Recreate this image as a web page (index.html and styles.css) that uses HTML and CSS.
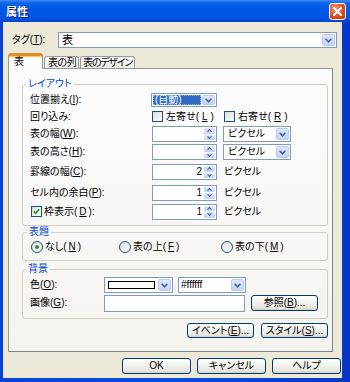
FILE: index.html
```html
<!DOCTYPE html>
<html lang="ja">
  <head>
    <meta charset="UTF-8" />
    <meta name="viewport" content="width=device-width, initial-scale=1.0" />
    <title>属性</title>
    <link rel="stylesheet" href="styles.css">
  </head>
  <body>
    <div class="window">
      <!-- Titellinje -->
      <div class="titlebar">
        <span class="title">属性</span>
        <span class="close">
          <svg width="9" height="9" viewBox="0 0 9 9"><path d="M1 1 L8 8 M8 1 L1 8" stroke="#fff" stroke-width="2" stroke-linecap="square"/></svg>
        </span>
      </div>

      <div class="client">
        <div class="tag_row">
          <span class="tag_label">タグ(<u>T</u>):</span>
          <div class="combo combo_tag">
            <span class="combo_text">表</span>
            <span class="arrow"><svg width="7" height="5" viewBox="0 0 7 5"><path d="M0.6 0.8 L3.5 3.8 L6.4 0.8" fill="none" stroke="#4d6185" stroke-width="1.6"/></svg></span>
          </div>
        </div>

        <!-- Faner -->
        <div class="tabs">
          <div class="tab tab_1 valgt">表</div>
          <div class="tab tab_2">表の列</div>
          <div class="tab tab_3">表のデザイン</div>
        </div>

        <div class="panel">
          <fieldset class="group group_layout">
            <legend>レイアウト</legend>
            <div class="layout_grid">
              <span class="lbl">位置揃え(<u>I</u>):</span>
              <div class="combo combo_auto">
                <span class="combo_sel">(自動)</span>
                <span class="arrow"><svg width="7" height="5" viewBox="0 0 7 5"><path d="M0.6 0.8 L3.5 3.8 L6.4 0.8" fill="none" stroke="#4d6185" stroke-width="1.6"/></svg></span>
              </div>
              <span></span>

              <span class="lbl">回り込み:</span>
              <span class="check_item"><span class="check"></span>左寄せ(<u>L</u>)</span>
              <span class="check_item right_check"><span class="check"></span>右寄せ(<u>R</u>)</span>

              <span class="lbl">表の幅(<u>W</u>):</span>
              <div class="spin">
                <span class="spin_val"></span>
                <span class="spin_btns">
                  <span class="spin_btn"><svg width="5" height="3" viewBox="0 0 5 3"><path d="M0.5 2.6 L2.5 0.6 L4.5 2.6" fill="none" stroke="#4d6185" stroke-width="1.1"/></svg></span>
                  <span class="spin_btn"><svg width="5" height="3" viewBox="0 0 5 3"><path d="M0.5 0.4 L2.5 2.4 L4.5 0.4" fill="none" stroke="#4d6185" stroke-width="1.1"/></svg></span>
                </span>
              </div>
              <div class="combo combo_unit">
                <span class="combo_text">ピクセル</span>
                <span class="arrow"><svg width="7" height="5" viewBox="0 0 7 5"><path d="M0.6 0.8 L3.5 3.8 L6.4 0.8" fill="none" stroke="#4d6185" stroke-width="1.6"/></svg></span>
              </div>

              <span class="lbl">表の高さ(<u>H</u>):</span>
              <div class="spin">
                <span class="spin_val"></span>
                <span class="spin_btns">
                  <span class="spin_btn"><svg width="5" height="3" viewBox="0 0 5 3"><path d="M0.5 2.6 L2.5 0.6 L4.5 2.6" fill="none" stroke="#4d6185" stroke-width="1.1"/></svg></span>
                  <span class="spin_btn"><svg width="5" height="3" viewBox="0 0 5 3"><path d="M0.5 0.4 L2.5 2.4 L4.5 0.4" fill="none" stroke="#4d6185" stroke-width="1.1"/></svg></span>
                </span>
              </div>
              <div class="combo combo_unit">
                <span class="combo_text">ピクセル</span>
                <span class="arrow"><svg width="7" height="5" viewBox="0 0 7 5"><path d="M0.6 0.8 L3.5 3.8 L6.4 0.8" fill="none" stroke="#4d6185" stroke-width="1.6"/></svg></span>
              </div>

              <span class="lbl">罫線の幅(<u>C</u>):</span>
              <div class="spin">
                <span class="spin_val">2</span>
                <span class="spin_btns">
                  <span class="spin_btn"><svg width="5" height="3" viewBox="0 0 5 3"><path d="M0.5 2.6 L2.5 0.6 L4.5 2.6" fill="none" stroke="#4d6185" stroke-width="1.1"/></svg></span>
                  <span class="spin_btn"><svg width="5" height="3" viewBox="0 0 5 3"><path d="M0.5 0.4 L2.5 2.4 L4.5 0.4" fill="none" stroke="#4d6185" stroke-width="1.1"/></svg></span>
                </span>
              </div>
              <span class="unit">ピクセル</span>

              <span class="lbl">セル内の余白(<u>P</u>):</span>
              <div class="spin">
                <span class="spin_val">1</span>
                <span class="spin_btns">
                  <span class="spin_btn"><svg width="5" height="3" viewBox="0 0 5 3"><path d="M0.5 2.6 L2.5 0.6 L4.5 2.6" fill="none" stroke="#4d6185" stroke-width="1.1"/></svg></span>
                  <span class="spin_btn"><svg width="5" height="3" viewBox="0 0 5 3"><path d="M0.5 0.4 L2.5 2.4 L4.5 0.4" fill="none" stroke="#4d6185" stroke-width="1.1"/></svg></span>
                </span>
              </div>
              <span class="unit">ピクセル</span>

              <span class="check_item frame_check"><span class="check checked"><svg width="7" height="7" viewBox="0 0 7 7"><path d="M0.8 3.4 L2.7 5.3 L6.2 1.2" fill="none" stroke="#21a121" stroke-width="1.6"/></svg></span>枠表示(<u>D</u>):</span>
              <div class="spin">
                <span class="spin_val">1</span>
                <span class="spin_btns">
                  <span class="spin_btn"><svg width="5" height="3" viewBox="0 0 5 3"><path d="M0.5 2.6 L2.5 0.6 L4.5 2.6" fill="none" stroke="#4d6185" stroke-width="1.1"/></svg></span>
                  <span class="spin_btn"><svg width="5" height="3" viewBox="0 0 5 3"><path d="M0.5 0.4 L2.5 2.4 L4.5 0.4" fill="none" stroke="#4d6185" stroke-width="1.1"/></svg></span>
                </span>
              </div>
              <span class="unit">ピクセル</span>
            </div>
          </fieldset>

          <fieldset class="group group_caption">
            <legend>表題</legend>
            <div class="radio_row">
              <span class="radio_item item_none"><span class="radio on"></span>なし(<u>N</u>)</span>
              <span class="radio_item item_top"><span class="radio"></span>表の上(<u>F</u>)</span>
              <span class="radio_item"><span class="radio"></span>表の下(<u>M</u>)</span>
            </div>
          </fieldset>

          <fieldset class="group group_bg">
            <legend>背景</legend>
            <div class="bg_row">
              <span class="bg_lbl">色(<u>O</u>):</span>
              <div class="combo combo_color">
                <span class="swatch"></span>
                <span class="arrow"><svg width="7" height="5" viewBox="0 0 7 5"><path d="M0.6 0.8 L3.5 3.8 L6.4 0.8" fill="none" stroke="#4d6185" stroke-width="1.6"/></svg></span>
              </div>
              <div class="combo combo_hex">
                <span class="combo_text">#ffffff</span>
                <span class="arrow"><svg width="7" height="5" viewBox="0 0 7 5"><path d="M0.6 0.8 L3.5 3.8 L6.4 0.8" fill="none" stroke="#4d6185" stroke-width="1.6"/></svg></span>
              </div>
            </div>
            <div class="bg_row">
              <span class="bg_lbl">画像(<u>G</u>):</span>
              <div class="textbox"></div>
              <button class="xp_btn btn_browse">参照(<u>B</u>)...</button>
            </div>
          </fieldset>

          <div class="panel_buttons">
            <button class="xp_btn">イベント(<u>E</u>)...</button>
            <button class="xp_btn">スタイル(<u>S</u>)...</button>
          </div>
        </div>

        <div class="dialog_buttons">
          <button class="xp_btn">OK</button>
          <button class="xp_btn">キャンセル</button>
          <button class="xp_btn">ヘルプ</button>
        </div>
      </div>
    </div>
  </body>
</html>
```

FILE: styles.css
```css
* {
  margin: 0;
  padding: 0;
  box-sizing: border-box;
}

body {
  font-family: "Liberation Sans", "Noto Sans CJK JP", sans-serif;
  font-size: 10px;
  line-height: 12px;
  font-feature-settings: "palt";
  color: #000;
  background: #ece9d8;
  white-space: nowrap;
}

u {
  text-underline-offset: 1px;
}

/* Vindue og titellinje */
.window {
  width: 350px;
  height: 382px;
  display: flex;
  flex-direction: column;
  background: linear-gradient(to right, #0842d6, #0a4ee0 50%, #0736c4);
}

.titlebar {
  height: 22px;
  display: flex;
  align-items: center;
  justify-content: space-between;
  padding: 2px 4px 0 6px;
  background: linear-gradient(#3d8ef6 0%, #0b62ea 14%, #0058e7 45%, #0052df 85%, #0043cf 100%);
}

.title {
  color: #fff;
  font-weight: bold;
  font-size: 11px;
  text-shadow: 1px 1px 0 #0a1e8c;
}

.close {
  width: 17px;
  height: 17px;
  margin-top: -1px;
  display: flex;
  align-items: center;
  justify-content: center;
  border: 1px solid #fff;
  border-radius: 3px;
  background: radial-gradient(circle at 35% 30%, #f0956d, #dc4f26 55%, #b8330f);
}

.client {
  flex: 1;
  margin: 0 8px 4px 3px;
  background: #ece9d8;
  display: flex;
  flex-direction: column;
}

/* Tag-linje */
.tag_row {
  display: flex;
  align-items: center;
  height: 16px;
  margin-top: 10px;
  padding-left: 9px;
}

.tag_label {
  width: 46px;
}

/* Kombobokse */
.combo {
  display: flex;
  align-items: stretch;
  background: #fff;
  border: 1px solid #7f9db9;
  padding: 1px;
}

.combo_text {
  flex: 1;
  padding-left: 3px;
  line-height: 12px;
}

.combo_tag {
  width: 279px;
  height: 16px;
}

.combo_tag .combo_text {
  padding-left: 2px;
  font-size: 11px;
}

.arrow {
  width: 13px;
  display: flex;
  align-items: center;
  justify-content: center;
  border-radius: 2px;
  border: 1px solid #b9cbf3;
  background: linear-gradient(#dde7fd, #c2d3fa);
}

.combo_auto {
  width: 66px;
  height: 14px;
  margin-left: -1px;
}

.combo_sel {
  flex: 1;
  margin-right: 1px;
  padding-left: 2px;
  line-height: 10px;
  color: #fff;
  background: #316ac5;
  outline: 1px dotted #8fb0e8;
  outline-offset: -1px;
}

.combo_unit {
  width: 68px;
  height: 16px;
}

/* Faner */
.tabs {
  display: flex;
  align-items: flex-end;
  height: 15px;
  margin: 5px 0 0 5px;
  gap: 1px;
  position: relative;
  z-index: 1;
}

.tab {
  height: 12px;
  border: 1px solid #919b9c;
  border-bottom: none;
  border-radius: 3px 3px 0 0;
  background: linear-gradient(#fff, #ecebe6);
  line-height: 11px;
  overflow: hidden;
}

.tab_1 {
  width: 35px;
  padding-left: 5px;
}

.tab_2 {
  width: 35px;
  padding-left: 3px;
  letter-spacing: -0.5px;
}

.tab_3 {
  width: 55px;
  padding-left: 2px;
  letter-spacing: -1.2px;
}

.tab.valgt {
  height: 16px;
  margin-bottom: -1px;
  background: #fcfcfe;
  border-top: 3px solid #e68b2c;
  box-shadow: inset 0 1px 0 #ffc73c;
  line-height: 12px;
}

.panel {
  width: 325px;
  height: 284px;
  margin-left: 5px;
  border: 1px solid #919b9c;
  border-right-color: #7c8687;
  border-bottom-color: #7c8687;
  background: linear-gradient(#fcfcfe, #f4f3ee);
  padding: 9px 0 0 13px;
  display: flex;
  flex-direction: column;
}

/* Grupperammer */
.group {
  width: 306px;
  border: 1px solid #d0d0bf;
  border-radius: 3px;
}

.group legend {
  color: #0046d5;
  padding: 0 2px;
  margin-left: -4px;
  line-height: 12px;
}

.group_layout {
  height: 148px;
  padding: 2px 7px 0;
}

.layout_grid {
  display: grid;
  grid-template-columns: 116px 65px 80px;
  grid-template-rows: 16px 17px 18px 18px 22px 19px 19px;
  column-gap: 6px;
  align-items: center;
}

.check_item {
  display: flex;
  align-items: center;
  gap: 3px;
}

.right_check {
  margin-left: 1px;
}

.frame_check {
  margin-left: 1px;
  gap: 2px;
}

.check {
  width: 11px;
  height: 11px;
  border: 1px solid #1c5180;
  background: linear-gradient(135deg, #dcdcd7, #fff);
  display: flex;
  align-items: center;
  justify-content: center;
}

/* Spin-felter */
.spin {
  width: 65px;
  height: 16px;
  display: flex;
  background: #fff;
  border: 1px solid #7f9db9;
  padding: 1px;
}

.spin_val {
  flex: 1;
  text-align: right;
  padding-right: 2px;
  line-height: 12px;
}

.spin_btns {
  width: 11px;
  display: flex;
  flex-direction: column;
  gap: 1px;
}

.spin_btn {
  flex: 1;
  display: flex;
  align-items: center;
  justify-content: center;
  border-radius: 1px;
  background: linear-gradient(#dde7fd, #c2d3fa);
}

.unit {
  padding-left: 1px;
}

/* Tabel-overskrift */
.group_caption {
  height: 35px;
  padding: 0 8px;
}

.radio_row {
  display: flex;
  align-items: center;
  height: 18px;
}

.radio_item {
  display: flex;
  align-items: center;
  gap: 2px;
}

.item_none {
  width: 88px;
}

.item_top {
  width: 102px;
}

.radio {
  width: 12px;
  height: 12px;
  border: 1px solid #1c5180;
  border-radius: 50%;
  background: linear-gradient(135deg, #dcdcd7, #fff);
  display: flex;
  align-items: center;
  justify-content: center;
}

.radio.on::after {
  content: "";
  width: 4px;
  height: 4px;
  border-radius: 50%;
  background: #21a121;
}

/* Baggrund */
.group_bg {
  height: 56px;
  margin-top: 2px;
  padding: 2px 7px 0;
  display: flex;
  flex-direction: column;
  gap: 2px;
}

.bg_row {
  display: flex;
  align-items: center;
  height: 16px;
}

.bg_lbl {
  width: 74px;
}

.combo_color {
  width: 69px;
  height: 16px;
  margin-right: 5px;
}

.swatch {
  flex: 1;
  margin: 2px 3px 2px 2px;
  background: #fff;
  border: 1px solid #000;
}

.combo_hex {
  width: 68px;
  height: 16px;
}

.combo_hex .combo_text {
  padding-left: 1px;
}

.textbox {
  width: 141px;
  height: 17px;
  background: #fff;
  border: 1px solid #7f9db9;
  margin-right: 6px;
}

/* Knapper */
.xp_btn {
  width: 67px;
  height: 15px;
  font-family: inherit;
  font-size: 10px;
  line-height: 12px;
  font-feature-settings: "palt";
  color: #000;
  border: 1px solid #003c74;
  border-radius: 3px;
  background: linear-gradient(#fff, #f3f3ef 40%, #e6e5de 85%, #d6d0c5);
}

.btn_browse {
  height: 16px;
}

.panel_buttons {
  width: 306px;
  display: flex;
  justify-content: flex-end;
  gap: 7px;
  margin-top: 4px;
}

.dialog_buttons {
  display: flex;
  justify-content: flex-end;
  gap: 6px;
  margin-top: 6px;
  padding-right: 1px;
}

.dialog_buttons .xp_btn {
  width: 69px;
  height: 16px;
}
```
